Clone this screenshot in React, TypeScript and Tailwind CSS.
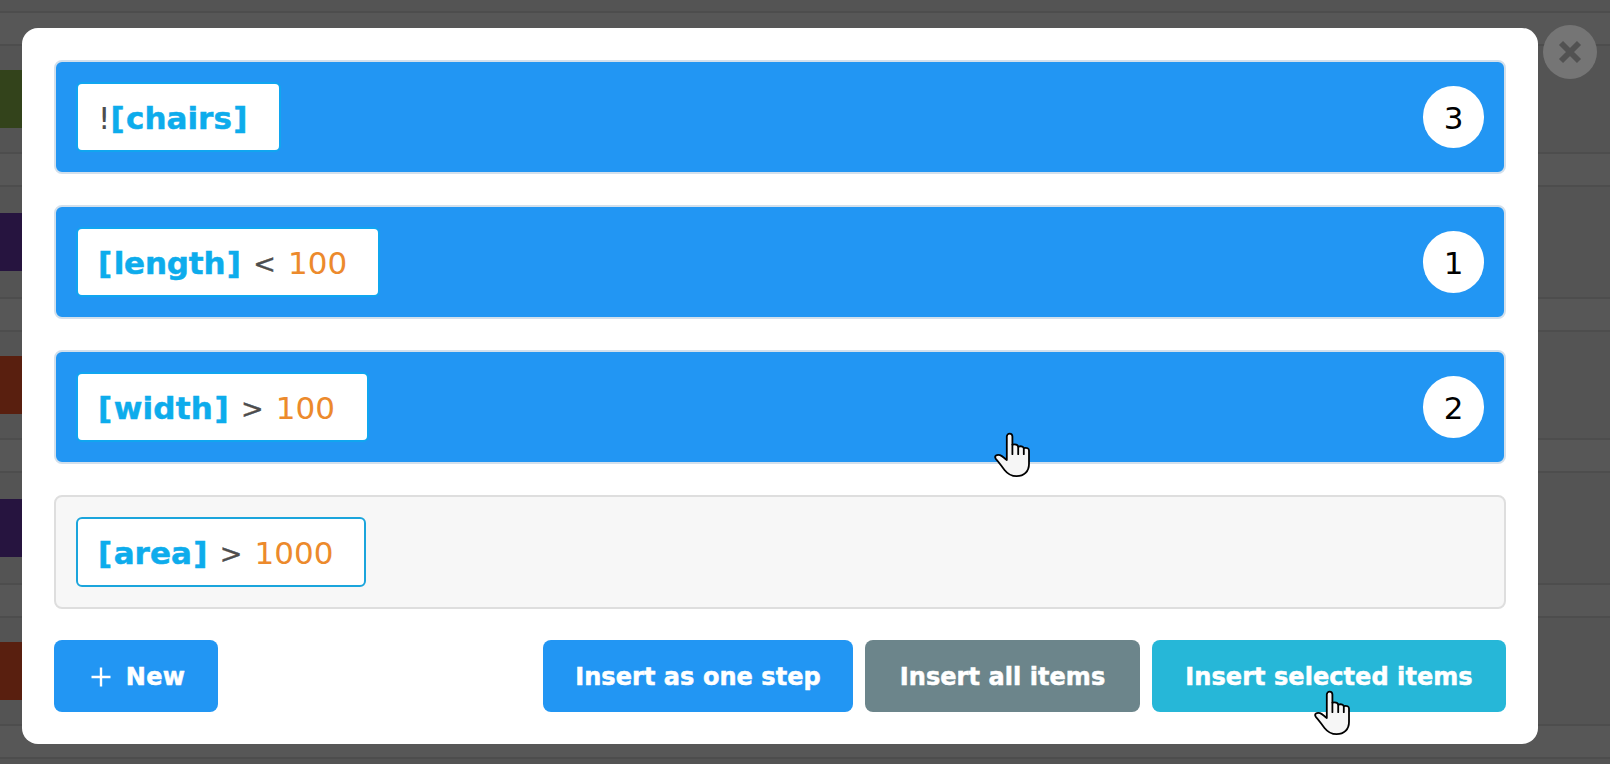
import React from 'react';

type Condition = {
  field: string;
  prefix?: string;
  operator?: string;
  value?: string;
  order?: number;
  chipWidth: string;
  tracking: string;
};

const conditions: Condition[] = [
  { prefix: '!', field: 'chairs', order: 3, chipWidth: 'w-[205px]', tracking: 'tracking-[0px]' },
  { field: 'length', operator: '<', value: '100', order: 1, chipWidth: 'w-[304px]', tracking: 'tracking-[-0.2px]' },
  { field: 'width', operator: '>', value: '100', order: 2, chipWidth: 'w-[293px]', tracking: 'tracking-[0.2px]' },
  { field: 'area', operator: '>', value: '1000', chipWidth: 'w-[290px]', tracking: 'tracking-[0px]' },
];

const steps = [
  { color: 'bg-[#33431b]', height: 'h-[110px]' },
  { color: 'bg-[#26143f]', height: 'h-[114px]' },
  { color: 'bg-[#591f0f]', height: 'h-[110px]' },
  { color: 'bg-[#26143f]', height: 'h-[114px]' },
  { color: 'bg-[#591f0f]', height: 'h-[110px]' },
];

function Pointer({ className }: { className: string }) {
  return (
    <svg className={className} width="36" height="46" viewBox="0 0 36 46" fill="#f6f6f6" stroke="#000" strokeWidth="1.8" strokeLinecap="round" strokeLinejoin="round">
      <path d="M12.8 28V4.6A2.8 2.9 0 0 1 18.4 4.6V12.6C21.5 12 23.8 12.8 24.2 14.6C27.3 13.8 29.3 14.6 29.8 16.2C33 15.2 35 16.6 35 18.4V32C35 39.5 30 44.2 22.6 44.2C17 44.2 13.5 41.8 10.5 38C7.3 34 4.8 30 1.8 26.8C-.2 23.8 3 22.2 6 23.2C8.5 24 10.5 26.5 12.8 28Z" />
      <path d="M18.4 12.6V22.2M24.2 14.6V22.2M29.8 16.2V22.2" fill="none" />
    </svg>
  );
}

function Row({ item }: { item: Condition }) {
  const selected = item.order !== undefined;
  return (
    <div className={`flex h-[114px] items-center justify-between rounded-lg border-2 px-5 ${selected ? 'border-[#d3e0ec] bg-[#2296f3]' : 'border-[#dedede] bg-[#f7f7f7]'}`}>
      <div className={`flex h-[70px] items-center whitespace-pre rounded-md border-2 bg-white pt-[2px] pl-5 text-[31px] leading-none text-[#4d4d4d] ${item.chipWidth} ${selected ? 'border-[#10a6f0]' : 'border-[#1ba5dc]'}`}>
        {item.prefix}
        <b className="flex gap-[1.5px] text-[#0dacec] [-webkit-text-stroke:0.5px_#0dacec]">
          <span>[</span>
          <span className={item.tracking}>{item.field}</span>
          <span>]</span>
        </b>
        {item.operator && <span className="w-[47px] text-center text-[27px] [-webkit-text-stroke:0.4px_#4d4d4d]">{item.operator}</span>}
        <span className="text-[#ec8a2c]">{item.value}</span>
      </div>
      {selected && (
        <div className="flex h-[62px] w-[61px] items-center justify-center rounded-full bg-white pt-[2px] text-[31px] leading-none text-black">{item.order}</div>
      )}
    </div>
  );
}

const button =
  'flex h-[72px] items-center justify-center whitespace-pre rounded-lg pt-px text-2xl font-bold tracking-[0.06px] text-white [-webkit-text-stroke:0.5px_white]';

export default function App() {
  return (
    <div className="relative h-[764px] w-[1610px] overflow-hidden bg-[#575757] font-['DejaVu_Sans',Verdana,sans-serif]">
      <div className="flex flex-col gap-[31px]">
        <div className="h-[13px] border-b-2 border-[#4d4d4d] bg-[#545454]" />
        {steps.map((step, i) => (
          <div key={i} className={`flex items-center border-y-2 border-[#4d4d4d] bg-[#545454] ${step.height}`}>
            <div className={`h-[58px] w-[60px] ${step.color}`} />
          </div>
        ))}
        <div className="h-10 border-t-2 border-[#4d4d4d] bg-[#545454]" />
      </div>

      <div className="absolute inset-0 flex items-start pt-[28px] pl-[22px]">
        <div className="flex h-[716px] w-[1516px] flex-col rounded-2xl bg-white px-8 pt-8">
          <div className="flex flex-col gap-[31px]">
            {conditions.map((item) => (
              <Row key={item.field} item={item} />
            ))}
          </div>
          <div className="mt-[31px] flex gap-3">
            <button className={`${button} mr-auto w-[164px] bg-[#2296f3] pl-1`}>
              <svg className="mr-[15px]" width="20" height="20" viewBox="0 0 20 20" stroke="currentColor" strokeWidth="2.4">
                <path d="M10 .5V19.5M.5 10H19.5" />
              </svg>
              <span className="tracking-[0.3px]">New</span>
            </button>
            <button className={`${button} w-[310px] bg-[#2296f3]`}>Insert as one step</button>
            <button className={`${button} w-[275px] bg-[#6c858b]`}>Insert all items</button>
            <button className={`${button} w-[354px] bg-[#26b7d8]`}>Insert selected items</button>
          </div>
        </div>
        <button className="-mt-[3px] ml-[5px] flex size-[54px] items-center justify-center rounded-full bg-[#757575]">
          <svg width="24" height="24" viewBox="0 0 24 24" stroke="#525252" strokeWidth="5.8">
            <path d="M3 3L21 21M21 3L3 21" />
          </svg>
        </button>
      </div>
      <Pointer className="absolute left-[994px] top-[432px]" />
      <Pointer className="absolute left-[1314px] top-[690px]" />
    </div>
  );
}
